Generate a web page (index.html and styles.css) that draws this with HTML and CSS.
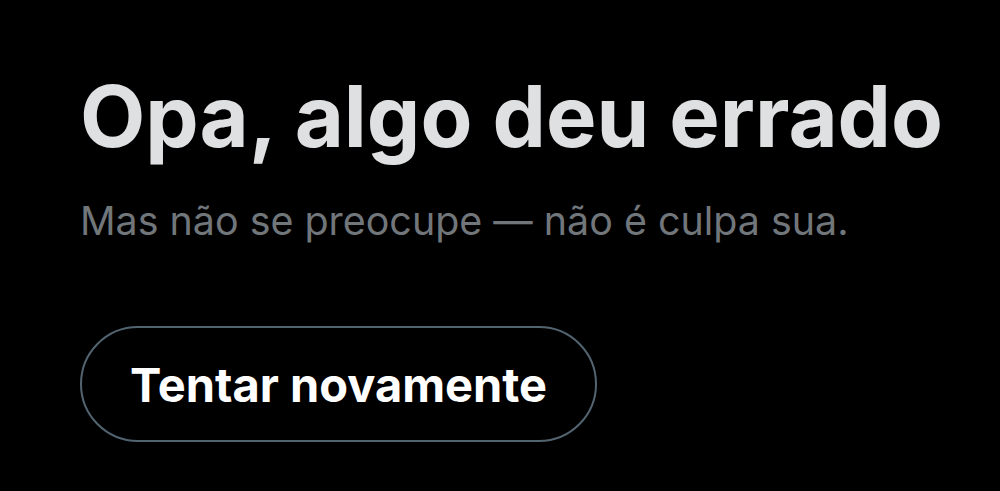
FILE: index.html
```html
<!DOCTYPE html>
<html lang="pt">
<head>
<meta charset="utf-8">
<link rel="stylesheet" href="styles.css">
</head>
<body>
<main class="page">
  <h1 class="title">Opa, algo deu errado</h1>
  <p class="subtitle">Mas não se preocupe — não é culpa sua.</p>
  <button class="retry">Tentar novamente</button>
</main>
</body>
</html>
```
FILE: styles.css
```css
html, body {
  margin: 0;
  padding: 0;
  background: #000;
  height: 100%;
}
body {
  font-family: Inter, "Noto Sans", sans-serif;
}
.page {
  display: flex;
  flex-direction: column;
  align-items: flex-start;
  padding: 66px 0 0 80px;
}
.title {
  margin: 0;
  font-size: 84.8px;
  font-weight: 700;
  line-height: 100px;
  color: #dfe0e1;
  letter-spacing: 0;
}
.subtitle {
  margin: 29px 0 0 0;
  font-size: 39.4px;
  line-height: 52px;
  color: #71767b;
}
.retry {
  margin-top: 79px;
  height: 116px;
  padding: 0 48px;
  border: 2px solid #536471;
  border-radius: 9999px;
  background: transparent;
  color: #fff;
  font-family: inherit;
  font-size: 47px;
  font-weight: 700;
}
```
